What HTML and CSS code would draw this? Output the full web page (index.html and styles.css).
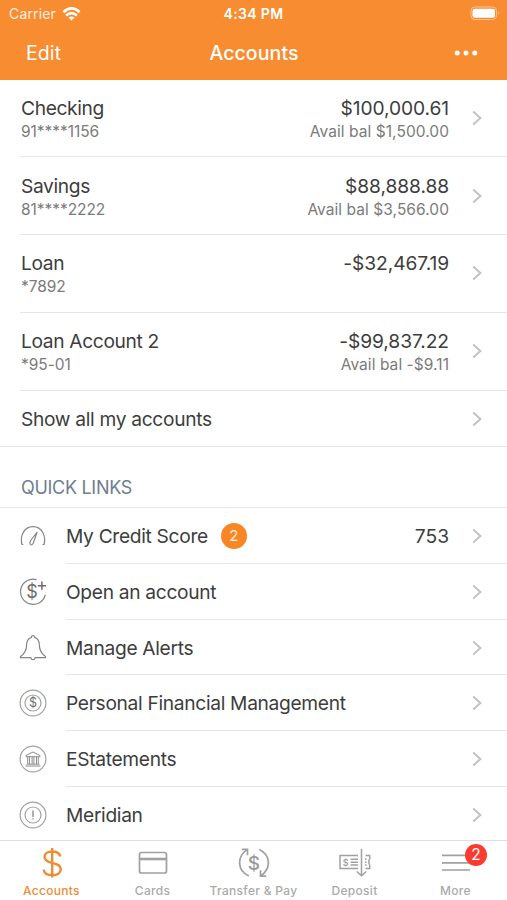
FILE: index.html
```
<!DOCTYPE html>
<html lang="en">
<head>
<meta charset="utf-8">
<title>Accounts</title>
<meta name="viewport" content="width=device-width, initial-scale=1">
<link rel="stylesheet" href="styles.css">
</head>
<body>
<svg class="defs" aria-hidden="true">
  <symbol id="chev" viewBox="0 0 10 16"><path d="M1.200 1.500 8.400 8l-7.200 6.500" fill="none" stroke="currentColor" stroke-width="2"/></symbol>
</svg>
<div class="app">
  <header class="header">
    <div class="status">
      <div class="carrier">
        <span>Carrier</span>
        <svg width="19" height="14" viewBox="0 0 18 14" fill="none" stroke="#fff" stroke-width="2.600"><path d="M.9 5.200Q9-2.300 17.100 5.200M3.600 8.500Q9 3.800 14.400 8.500"/><path d="M9 13.600 6 10.600Q9 8.200 12 10.600Z" fill="#fff" stroke="none"/></svg>
      </div>
      <div class="time">4:34 PM</div>
      <svg class="battery" width="31" height="15" viewBox="0 0 31 15"><rect x="1" y="1" width="25.500" height="12.500" rx="3.800" fill="none" stroke="#fbc493" stroke-width="1"/><rect x="2.500" y="2.800" width="22.500" height="9" rx="2.300" fill="#fff"/><path d="M28.200 5.300q1.700 2 0 4z" fill="#fbc493"/></svg>
    </div>
    <nav class="navbar">
      <span class="edit">Edit</span>
      <h1>Accounts</h1>
      <svg class="dots" width="24" height="6" viewBox="0 0 24 6" fill="#fff"><circle cx="3.200" cy="3" r="2.500"/><circle cx="12" cy="3" r="2.500"/><circle cx="20.800" cy="3" r="2.500"/></svg>
    </nav>
  </header>

  <main class="content">
    <section class="accounts">
      <div class="account">
        <div class="who"><div class="name">Checking</div><div class="sub">91****1156</div></div>
        <div class="amount"><div class="name">$100,000.61</div><div class="sub">Avail bal $1,500.00</div></div>
        <svg class="chev"><use href="#chev"/></svg>
      </div>
      <div class="account">
        <div class="who"><div class="name">Savings</div><div class="sub">81****2222</div></div>
        <div class="amount"><div class="name">$88,888.88</div><div class="sub">Avail bal $3,566.00</div></div>
        <svg class="chev"><use href="#chev"/></svg>
      </div>
      <div class="account">
        <div class="who"><div class="name">Loan</div><div class="sub">*7892</div></div>
        <div class="amount"><div class="name">-$32,467.19</div></div>
        <svg class="chev"><use href="#chev"/></svg>
      </div>
      <div class="account">
        <div class="who"><div class="name">Loan Account 2</div><div class="sub">*95-01</div></div>
        <div class="amount"><div class="name">-$99,837.22</div><div class="sub">Avail bal -$9.11</div></div>
        <svg class="chev"><use href="#chev"/></svg>
      </div>
    </section>
    <div class="show-all"><span class="label">Show all my accounts</span><svg class="chev"><use href="#chev"/></svg></div>

    <h2 class="section-title">QUICK LINKS</h2>

    <section class="links">
      <div class="link">
        <svg class="icon" viewBox="0 0 28 28"><path d="M4.300 22.500H3C.8 15 4.500 4.700 14 4.700S27.200 15 25 22.500H23.700M18.200 10l-5.800 7.500c-2 2.700-1.900 4.300-.8 5 1.200.7 2.600-.1 3.200-3z"/></svg>
        <div class="row"><span class="label">My Credit Score</span><span class="pill">2</span><span class="value">753</span><svg class="chev"><use href="#chev"/></svg></div>
      </div>
      <div class="link">
        <svg class="icon" viewBox="0 0 28 28"><path d="M17.500 1.600A12.600 12.600 0 1 0 26.300 17"/><path class="dark" d="M18.800 7.700h8.200M22.900 3.600v8.200"/><text class="d1" x="13" y="19.800">$</text></svg>
        <div class="row"><span class="label">Open an account</span><svg class="chev"><use href="#chev"/></svg></div>
      </div>
      <div class="link">
        <svg class="icon" viewBox="0 0 28 28"><path d="M14 1.700c-1 0-1.600.8-1.600 1.700C9 4.500 7.600 7.500 7.600 11.300c0 5.700-2 8.400-6.100 11.200v1.100H11.800c.3 1.300 1.100 2.100 2.200 2.100s1.900-.8 2.200-2.100h10.300v-1.100c-4.100-2.800-6.100-5.500-6.100-11.200 0-3.800-1.400-6.800-4.800-7.900C15.600 2.500 15 1.700 14 1.700z"/></svg>
        <div class="row"><span class="label">Manage Alerts</span><svg class="chev"><use href="#chev"/></svg></div>
      </div>
      <div class="link">
        <svg class="icon light" viewBox="0 0 28 28"><circle cx="14" cy="14" r="12.900"/><circle cx="14" cy="14" r="8"/><text class="d2" x="14" y="18.300">$</text></svg>
        <div class="row"><span class="label">Personal Financial Management</span><svg class="chev"><use href="#chev"/></svg></div>
      </div>
      <div class="link">
        <svg class="icon light" viewBox="0 0 28 28"><circle cx="14" cy="14" r="12.900"/><path class="bank" d="M7 10.500 14 7l7 3.500v1.200H7zM8.700 12v7M10.500 12v7M13.100 12v7M14.900 12v7M17.500 12v7M19.300 12v7M7.500 19.200h13M6.500 21h15"/></svg>
        <div class="row"><span class="label">EStatements</span><svg class="chev"><use href="#chev"/></svg></div>
      </div>
      <div class="link">
        <svg class="icon light" viewBox="0 0 28 28"><circle cx="14" cy="14" r="12.900"/><circle cx="14" cy="14" r="8"/><path class="mark" d="M14 9.600v6.400M14 17.200v1.400"/></svg>
        <div class="row"><span class="label">Meridian</span><svg class="chev"><use href="#chev"/></svg></div>
      </div>
    </section>
  </main>

  <footer class="tabs">
    <div class="tab active">
      <svg width="34" height="32" viewBox="0 0 34 32"><path d="M25.300 9.500c-.8-3.200-3.900-5-8-5-4.700 0-7.800 2.100-7.800 5.400 0 3.700 3.300 4.900 7.800 6 5 1.300 8.500 2.500 8.500 6.400 0 3.700-3.600 5.900-8.500 5.900-4.600 0-8.100-2-8.600-5.600M17.200 1v29.500" stroke-width="2.400"/></svg>
      <span>Accounts</span>
    </div>
    <div class="tab">
      <svg width="34" height="32" viewBox="0 0 34 32"><rect x="3.500" y="5.500" width="27" height="20.500" rx="2"/><path d="M3.500 12h27" stroke-width="2.600"/></svg>
      <span>Cards</span>
    </div>
    <div class="tab">
      <svg width="34" height="32" viewBox="0 0 34 32"><path d="M11.800 29C0 23.500-.3 10 10 2.600M4.800 2.300h5.700v6M22.200 2.500C34 8 34.300 21.500 24 28.900M29.200 29.200h-5.700v-6"/><text x="17" y="22.500">$</text></svg>
      <span>Transfer &amp; Pay</span>
    </div>
    <div class="tab">
      <svg width="34" height="32" viewBox="0 0 34 32"><path d="M20 8.500H2v13h18M27.500 8.500h4.200v4M31.700 17.500v4h-4.200M23.500 2v27M18.800 24.500l4.700 4.300 4.700-4.300M12.500 12.300h7.500M12.500 15.200h7.500M12.500 18h7.500M27 12.300h1.600M27 15.200h1.600M27 18h1.600M31 12.500v5" stroke-width="1.500"/><text class="mini" x="7.700" y="18.500">$</text></svg>
      <span>Deposit</span>
    </div>
    <div class="tab">
      <svg width="34" height="32" viewBox="0 0 34 32"><path d="M3 8.300h28M3 15.800h28M3 23h28"/></svg>
      <span>More</span>
      <b class="badge">2</b>
    </div>
  </footer>
</div>
</body>
</html>
```
FILE: styles.css
```
* { box-sizing: border-box; }
body { margin: 0; background: #fff; font-family: Inter, "Liberation Sans", sans-serif; color: #3d3d3d; }
.defs { display: none; }
.app { width: 507px; height: 900px; overflow: hidden; display: flex; flex-direction: column; }

.header { flex: none; height: 80px; background: #f88c30; color: #fff; }
.status { height: 27px; display: grid; grid-template-columns: 1fr auto 1fr; align-items: center; padding: 0 6px; font-size: 14px; }
.carrier { display: flex; align-items: center; gap: 6px; padding-left: 3px; color: #fff0e2; letter-spacing: .15px; }
.time { font-weight: 600; letter-spacing: .35px; }
.battery { justify-self: end; }
.navbar { height: 52px; display: grid; grid-template-columns: 1fr auto 1fr; align-items: center; padding: 0 29px 0 26px; font-size: 19.500px; }
.edit { letter-spacing: .1px; }
.navbar h1 { margin: 0; padding-left: 4px; font-size: 19.500px; font-weight: 500; letter-spacing: .1px; }
.dots { justify-self: end; }

.content { flex: 1; min-height: 0; overflow: hidden; }
.account { height: 77.900px; margin-left: 20px; padding: 15px 25px 0 1px; display: flex; border-bottom: 1px solid #e6e6e6; }
.account:first-child { height: 77px; }
.who { flex: 1; }
.amount { text-align: right; margin-right: 23px; }
.name { font-size: 19.200px; line-height: 26px; letter-spacing: -.35px; white-space: nowrap; }
.amount .name { letter-spacing: -.08px; }
.sub { font-size: 15.500px; line-height: 22px; color: #7b7b7b; letter-spacing: -.05px; white-space: nowrap; }
.amount .sub { letter-spacing: .06px; }
.chev { flex: none; width: 10px; height: 16px; color: #c3c3c5; }
.account .chev { margin-top: 15px; }
.account + .account { padding-top: 15.500px; }
.show-all { height: 56px; display: flex; align-items: center; padding: 1px 25px 0 21px; border-bottom: 1px solid #e6e6e6; }
.label { font-size: 19.200px; letter-spacing: -.32px; white-space: nowrap; }
.show-all .chev { margin-left: auto; }
.section-title { margin: 0; height: 61.500px; padding: 28px 21px 0; font-size: 18px; line-height: 26px; font-weight: 400; letter-spacing: -.3px; color: #707d92; border-bottom: 1px solid #e6e6e6; }

.link { display: flex; align-items: center; height: 55.750px; padding-left: 19px; }
.icon { flex: none; width: 28px; height: 28px; fill: none; stroke: #858585; stroke-width: 1.200; }
.icon.light { stroke: #a2a2a2; }
.icon text { fill: #6b6b6b; stroke: none; text-anchor: middle; font-family: Inter, sans-serif; }
.icon .dark { stroke: #6b6b6b; stroke-width: 1.500; }
.icon .mark { stroke: #777; stroke-width: 1.200; }
.icon .bank { stroke: #8c8c8c; stroke-width: 1; }
.d1 { font-size: 18px; }
.d2 { font-size: 12.500px; }
.row { flex: 1; height: 100%; margin-left: 19px; padding: 1px 25px 0 0; display: flex; align-items: center; border-bottom: 1px solid #e6e6e6; }
.pill { width: 26px; height: 26px; margin-left: 13px; border-radius: 50%; background: #f98625; color: #fff0df; font-size: 15px; line-height: 26px; text-align: center; }
.row .chev { margin-left: auto; }
.value { margin-left: auto; font-size: 19.200px; }
.row .value + .chev { margin-left: 23px; }

.tabs { flex: none; height: 60px; background: #fff; border-top: 1px solid #dedede; display: grid; grid-template-columns: repeat(5, 101px); padding-left: 1px; }
.tab { position: relative; display: flex; flex-direction: column; align-items: center; padding-top: 6px; font-size: 12px; font-weight: 500; line-height: 16px; color: #aaa; white-space: nowrap; letter-spacing: .3px; }
.tab svg { fill: none; stroke: #a0a0a0; stroke-width: 1.700; flex: none; }
.tab span { margin-top: 4px; }
.tab text { fill: #999; stroke: none; font-family: Inter, sans-serif; font-size: 19px; text-anchor: middle; font-weight: 500; letter-spacing: 0; }
.tab text.mini { font-size: 9px; }
.tab.active { color: #ee8b35; }
.tab.active svg { stroke: #ee8b35; }
.badge { position: absolute; left: 60px; top: 3px; width: 22px; height: 22px; border-radius: 50%; background: #fb3b30; color: #fff; font-size: 15.500px; line-height: 22px; font-weight: 400; text-align: center; letter-spacing: 0; }
```
